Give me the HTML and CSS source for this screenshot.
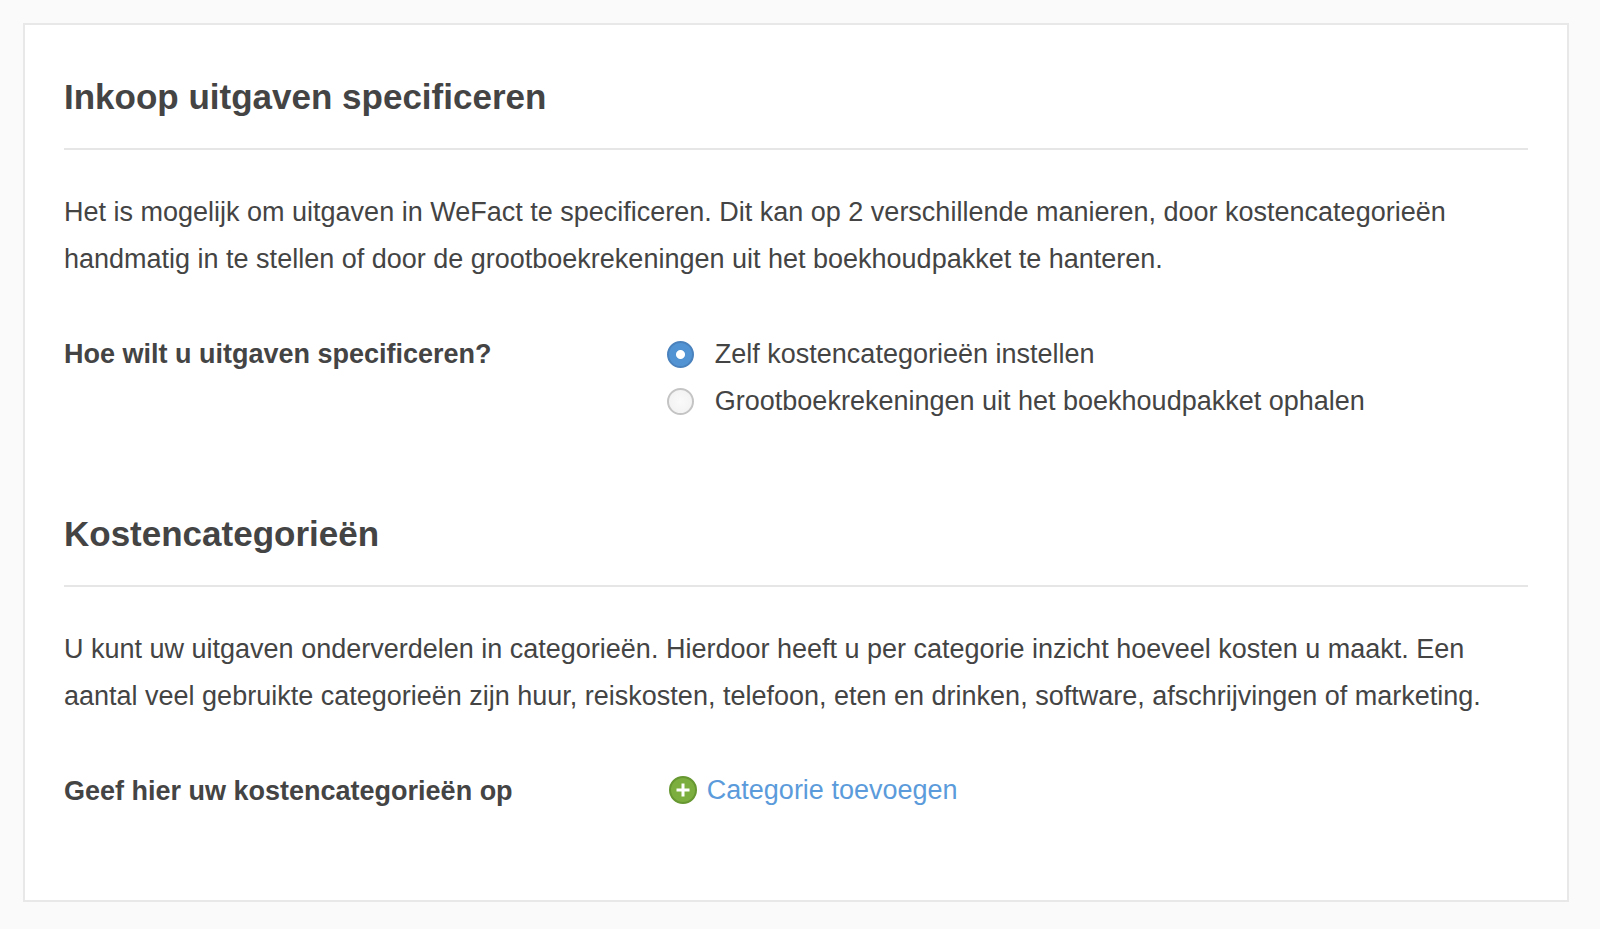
FILE: index.html
```html
<!DOCTYPE html>
<html lang="nl">
<head>
    <meta charset="UTF-8">
    <meta name="viewport" content="width=device-width, initial-scale=1.0">
    <title>Inkoop uitgaven specificeren</title>
    <link rel="stylesheet" href="styles.css">
</head>
<body>
    <main class="panel">
        <section class="section">
            <h2>Inkoop uitgaven specificeren</h2>
            <p>Het is mogelijk om uitgaven in WeFact te specificeren. Dit kan op 2 verschillende manieren, door kostencategorieën handmatig in te stellen of door de grootboekrekeningen uit het boekhoudpakket te hanteren.</p>
            <div class="form-row" role="radiogroup" aria-labelledby="specify-label">
                <strong id="specify-label">Hoe wilt u uitgaven specificeren?</strong>
                <div class="options">
                    <label for="own"><input type="radio" id="own" name="specify" checked>Zelf kostencategorieën instellen</label>
                    <label for="ledger"><input type="radio" id="ledger" name="specify">Grootboekrekeningen uit het boekhoudpakket ophalen</label>
                </div>
            </div>
        </section>
        <section class="section">
            <h2>Kostencategorieën</h2>
            <p>U kunt uw uitgaven onderverdelen in categorieën. Hierdoor heeft u per categorie inzicht hoeveel kosten u maakt. Een aantal veel gebruikte categorieën zijn huur, reiskosten, telefoon, eten en drinken, software, afschrijvingen of marketing.</p>
            <div class="form-row">
                <strong>Geef hier uw kostencategorieën op</strong>
                <a class="add-link" href="#">
                    <svg width="28" height="28" viewBox="0 0 28 28" aria-hidden="true">
                        <circle cx="14" cy="14" r="13" fill="#7bae3e" stroke="#669731" stroke-width="2"/>
                        <path d="M14 7.5v13M7.5 14h13" stroke="#fff" stroke-width="3"/>
                    </svg>
                    Categorie toevoegen
                </a>
            </div>
        </section>
    </main>
</body>
</html>
```
FILE: styles.css
```css
body {
    margin: 0;
    padding: 23px 31px 27px 23px;
    background-color: #fafafa;
    color: #444;
    font-family: "Liberation Sans", Arial, sans-serif;
    font-size: 27px;
    line-height: 47px;
}
.panel {
    padding: 48px 39px 85px;
    background-color: #fff;
    border: 2px solid #e8e8e8;
}
.section + .section {
    margin-top: 85px;
}
h2 {
    margin: 0 0 39px;
    padding-bottom: 27px;
    border-bottom: 2px solid #e6e6e6;
    font-size: 35px;
    line-height: 48px;
}
p {
    margin: 0 0 48px;
}
.form-row {
    display: grid;
    grid-template-columns: 7fr 10fr;
    align-items: start;
}
.options label {
    display: flex;
    align-items: center;
    gap: 21px;
}
input[type=radio] {
    appearance: none;
    box-sizing: border-box;
    width: 27px;
    height: 27px;
    margin: 0;
    border: 2px solid #c4c4c4;
    border-radius: 50%;
    background: radial-gradient(circle, #fafafa, #f0f0f0);
}
input[type=radio]:checked {
    border-color: #4a82bd;
    background: radial-gradient(circle, #fff 4px, #5294d3 5px);
}
.add-link {
    display: flex;
    align-items: center;
    gap: 10px;
    padding-left: 2px;
    color: #5b9bdb;
    line-height: 44px;
    text-decoration: none;
}
```
